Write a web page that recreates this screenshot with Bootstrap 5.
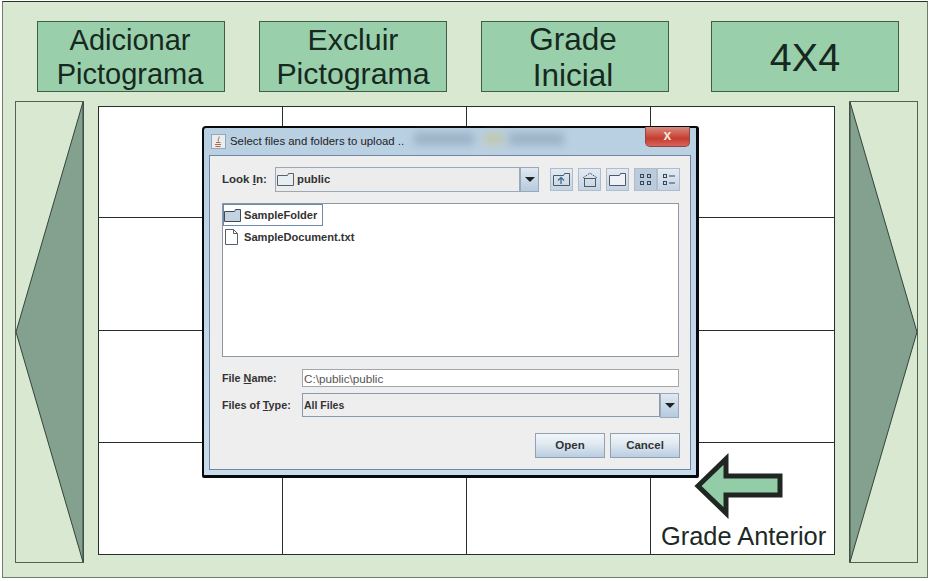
<!DOCTYPE html>
<html lang="pt">
<head>
<meta charset="utf-8">
<title>Grade</title>
<link href="https://cdn.jsdelivr.net/npm/bootstrap@5.3.0/dist/css/bootstrap.min.css" rel="stylesheet">
<style>
html,body{background:#fff;margin:0}
body{font-family:"Liberation Sans",Arial,sans-serif;width:930px;height:581px;overflow:hidden}
.frame{margin:1px 0 0 2px;width:926px;height:577px;background:#d9e8d0;border:1px solid #6f7d68;border-top-color:#26322a;padding:19px 10px 0 12px}
.toprow{height:71px;padding-left:22px;margin-bottom:9px}
.tile{width:188px;height:71px;background:#99d0ab;border:1px solid #3f5d4b;color:#17281f;line-height:34px;text-align:center;padding-top:1px}
.tile-a{font-size:29px;margin-right:34px;padding-right:2px}
.tile-b{font-size:30.3px;margin-right:34px}
.tile-c{font-size:31.5px;margin-right:42px;padding-right:4px;padding-top:0;line-height:35.5px}
.tile-big{font-size:39.5px}
.midrow{height:462px}
.side{width:69px;height:462px;flex:none;display:block}
.board{position:relative;width:737px;height:449px;margin:5px 14px 0 14px;background:#fff;border:1px solid #24302a;display:grid;grid-template-columns:184px 184px 184px 183px;grid-template-rows:111px 113px 112px 111px;flex:none}
.cellb{border-right:1px solid #24302a;border-bottom:1px solid #24302a}
.cellb:nth-child(4n){border-right:0}
.cellb:nth-child(n+13){border-bottom:0}
.jdialog{position:absolute;left:103px;top:19px;width:497px;height:352px;background:linear-gradient(180deg,#b9cfe2,#c9dcec);border:2px solid #08090c;border-bottom-width:3px;border-right-width:3px;border-radius:4px 3px 2px 2px;padding:0 5px 5px 5px;font-size:11.3px;font-weight:700;color:#333}
.jtitle{height:27px;font-weight:400;font-size:11.4px;color:#222;padding-left:2px;position:relative;gap:4px}
.jclose{position:absolute;right:1px;top:-1px;width:45px;height:20px;background:linear-gradient(180deg,#d98a80,#c63c30 60%,#d8635a);border:1px solid #8d4a45;border-top:0;border-radius:0 0 5px 5px;color:#f3e6d8;font-size:14px;font-weight:700;line-height:17px;text-align:center}
.jsmear{position:absolute;top:5px;height:12px;background:#7c93a8;filter:blur(4px);opacity:.5}
.smear-a{left:205px;width:60px}.smear-b{left:275px;width:20px;background:#c9c27f}.smear-c{left:300px;width:55px}
.jbody{height:315px;background:#eee;border:1px solid #7186a0;padding:11px 11px 0 12px}
.lookrow{height:25px;margin-bottom:11px}
.looklabel{width:53px;font-size:11.5px}
.combo{height:25px;background:#ececec;border:1px solid #9aa9b8;flex:1;align-items:center;padding-left:1px;gap:3px}
.combo-arrow{width:19px;height:25px;background:linear-gradient(180deg,#dfe9f2,#b6cbde);border:1px solid #9aa9b8;flex:none;display:flex;align-items:center;justify-content:center}
.tri{width:0;height:0;border-left:5px solid transparent;border-right:5px solid transparent;border-top:5px solid #222}
.tools{margin-left:11px;gap:5px;margin-right:-1px}
.tbtn{width:23px;height:23px;background:linear-gradient(180deg,#e3ebf3,#c3d4e4);border:1px solid #aebccb;display:flex;align-items:center;justify-content:center;flex:none}
.tbtn-on{background:#b9cbdd}
.tbtn-join{margin-left:-5px}
.filelist{height:154px;background:#fff;border:1px solid #8c98a5;margin-bottom:12px;padding:0;font-size:11.1px}
.fileitem{height:22px;gap:3px;padding-left:1px;flex:none}
.fileitem-sel{border:1px solid #6e8aa8;width:100px;padding-left:0}
.filerow{height:18px;margin-bottom:6px;margin-top:1px}
.filerow .formlabel{padding-top:1px}
.formlabel{width:80px;font-size:10.8px;flex:none}
.fname{flex:1;height:18px;background:#fff;border:1px solid #a0a6ac;font-weight:400;color:#555;padding-left:1px;line-height:18px;font-size:11.7px}
.typerow{height:24px;margin-bottom:16px}
.typebox{flex:1;height:24px;background:#eee;border:1px solid #8b9aab;padding-left:1px;line-height:22px;font-size:10.5px}
.jactions{gap:5px;margin-right:-1px}
.jbtn{width:70px;height:25px;background:linear-gradient(180deg,#f2f6fa,#dfe8f1 45%,#b9cde0);border:1px solid #92a1b1;border-radius:0;font-size:11.5px;font-weight:700;color:#333;padding:0;line-height:23px}
.u{text-decoration:underline}
.backarrow{position:absolute;left:594px;top:346px}
.backlabel{position:absolute;left:562px;top:414px;font-size:25.4px;line-height:30px;color:#1d2a24;white-space:nowrap}
</style>
</head>
<body>
<div class="frame">
  <div class="toprow d-flex">
    <div class="tile tile-a">Adicionar<br>Pictograma</div>
    <div class="tile tile-b">Excluir<br>Pictograma</div>
    <div class="tile tile-c">Grade<br>Inicial</div>
    <div class="tile tile-big d-flex align-items-center justify-content-center">4X4</div>
  </div>
  <div class="midrow d-flex">
    <svg class="side" viewBox="0 0 69 462"><rect x=".5" y=".5" width="68" height="461" fill="#d9e8d0" stroke="#4f6350"/><polygon points="1,231 68,1 68,461" fill="#84a08f" stroke="#33443a"/></svg>
    <div class="board">
      <div class="cellb"></div><div class="cellb"></div><div class="cellb"></div><div class="cellb"></div>
      <div class="cellb"></div><div class="cellb"></div><div class="cellb"></div><div class="cellb"></div>
      <div class="cellb"></div><div class="cellb"></div><div class="cellb"></div><div class="cellb"></div>
      <div class="cellb"></div><div class="cellb"></div><div class="cellb"></div><div class="cellb"></div>
      <div class="jdialog">
        <div class="jtitle d-flex align-items-center">
          <svg width="15" height="15" viewBox="0 0 15 15"><rect x=".5" y=".5" width="14" height="14" fill="#e8edf2" stroke="#98a6b4"/><path d="M8 2.500c1 2-2 2.500-.5 5M5 8.500h4.500M4 10.500h6M4.500 12.500h5" fill="none" stroke="#b8673a"/></svg>
          <span>Select files and folders to upload ..</span>
          <span class="jsmear smear-a"></span><span class="jsmear smear-b"></span><span class="jsmear smear-c"></span>
          <div class="jclose">x</div>
        </div>
        <div class="jbody">
          <div class="lookrow d-flex align-items-center">
            <div class="looklabel">Look <span class="u">I</span>n:</div>
            <div class="combo d-flex">
              <svg width="17" height="13" viewBox="0 0 17 13"><path d="M.5 2.500h10l1-2h5v12H.5z" fill="#e6edf3" stroke="#57616c"/></svg>
              <span>public</span>
            </div>
            <div class="combo-arrow"><span class="tri"></span></div>
            <div class="tools d-flex">
              <div class="tbtn"><svg width="17" height="13" viewBox="0 0 17 13"><path d="M.5 2.500h10l1-2h5v12H.5z" fill="none" stroke="#4f5a66"/><path d="M8 11V5M5 7.500l3-3 3 3" fill="none" stroke="#3f6f8f" stroke-width="1.300"/></svg></div>
              <div class="tbtn"><svg width="16" height="15" viewBox="0 0 16 15"><path d="M1 6l7-5 7 5" fill="none" stroke="#4f5a66" stroke-dasharray="2 1"/><rect x="2.500" y="6.500" width="11" height="8" fill="none" stroke="#4f5a66"/></svg></div>
              <div class="tbtn"><svg width="17" height="13" viewBox="0 0 17 13"><path d="M.5 2.500h10l1-2h5v12H.5z" fill="#eef2f6" stroke="#4f5a66"/></svg></div>
              <div class="tbtn tbtn-on"><svg width="14" height="13" viewBox="0 0 14 13"><g fill="none" stroke="#3c4650"><rect x="1.500" y="1.500" width="3" height="3"/><rect x="1.500" y="8.500" width="3" height="3"/><rect x="8.500" y="1.500" width="3" height="3"/><rect x="8.500" y="8.500" width="3" height="3"/></g></svg></div>
              <div class="tbtn tbtn-join"><svg width="14" height="13" viewBox="0 0 14 13"><g fill="none" stroke="#3c4650"><rect x="1.500" y="1.500" width="3" height="3"/><rect x="1.500" y="8.500" width="3" height="3"/><path d="M7 3h6M7 10h6"/></g></svg></div>
            </div>
          </div>
          <div class="filelist">
            <div class="fileitem fileitem-sel d-flex align-items-center">
              <svg width="17" height="13" viewBox="0 0 17 13" class="flex-shrink-0"><path d="M.5 2.500h10l1-2h5v12H.5z" fill="#c3d3e2" stroke="#3f4a55"/></svg>
              <span>SampleFolder</span>
            </div>
            <div class="fileitem d-flex align-items-center text-nowrap">
              <svg width="17" height="16" viewBox="0 0 17 16" class="flex-shrink-0"><path d="M1.500.5h8l4 4v11h-12z" fill="#fff" stroke="#55606b"/><path d="M9.500.5v4h4" fill="none" stroke="#55606b"/></svg>
              <span>SampleDocument.txt</span>
            </div>
          </div>
          <div class="filerow d-flex align-items-center">
            <div class="formlabel">File <span class="u">N</span>ame:</div>
            <div class="fname">C:\public\public</div>
          </div>
          <div class="typerow d-flex align-items-center">
            <div class="formlabel">Files of <span class="u">T</span>ype:</div>
            <div class="typebox">All Files</div>
            <div class="combo-arrow"><span class="tri"></span></div>
          </div>
          <div class="jactions d-flex justify-content-end">
            <button class="btn jbtn" type="button">Open</button>
            <button class="btn jbtn" type="button">Cancel</button>
          </div>
        </div>
      </div>
      <svg class="backarrow" width="92" height="66" viewBox="0 0 92 66"><path d="M5 33 33 6V23H87V42H33V60Z" fill="#93cda7" stroke="#202622" stroke-width="5"/></svg>
      <div class="backlabel">Grade Anterior</div>
    </div>
    <svg class="side" viewBox="0 0 69 462"><rect x=".5" y=".5" width="68" height="461" fill="#d9e8d0" stroke="#4f6350"/><polygon points="68,231 1,1 1,461" fill="#84a08f" stroke="#33443a"/></svg>
  </div>
</div>
<script src="https://cdn.jsdelivr.net/npm/bootstrap@5.3.0/dist/js/bootstrap.bundle.min.js"></script>
</body>
</html>
